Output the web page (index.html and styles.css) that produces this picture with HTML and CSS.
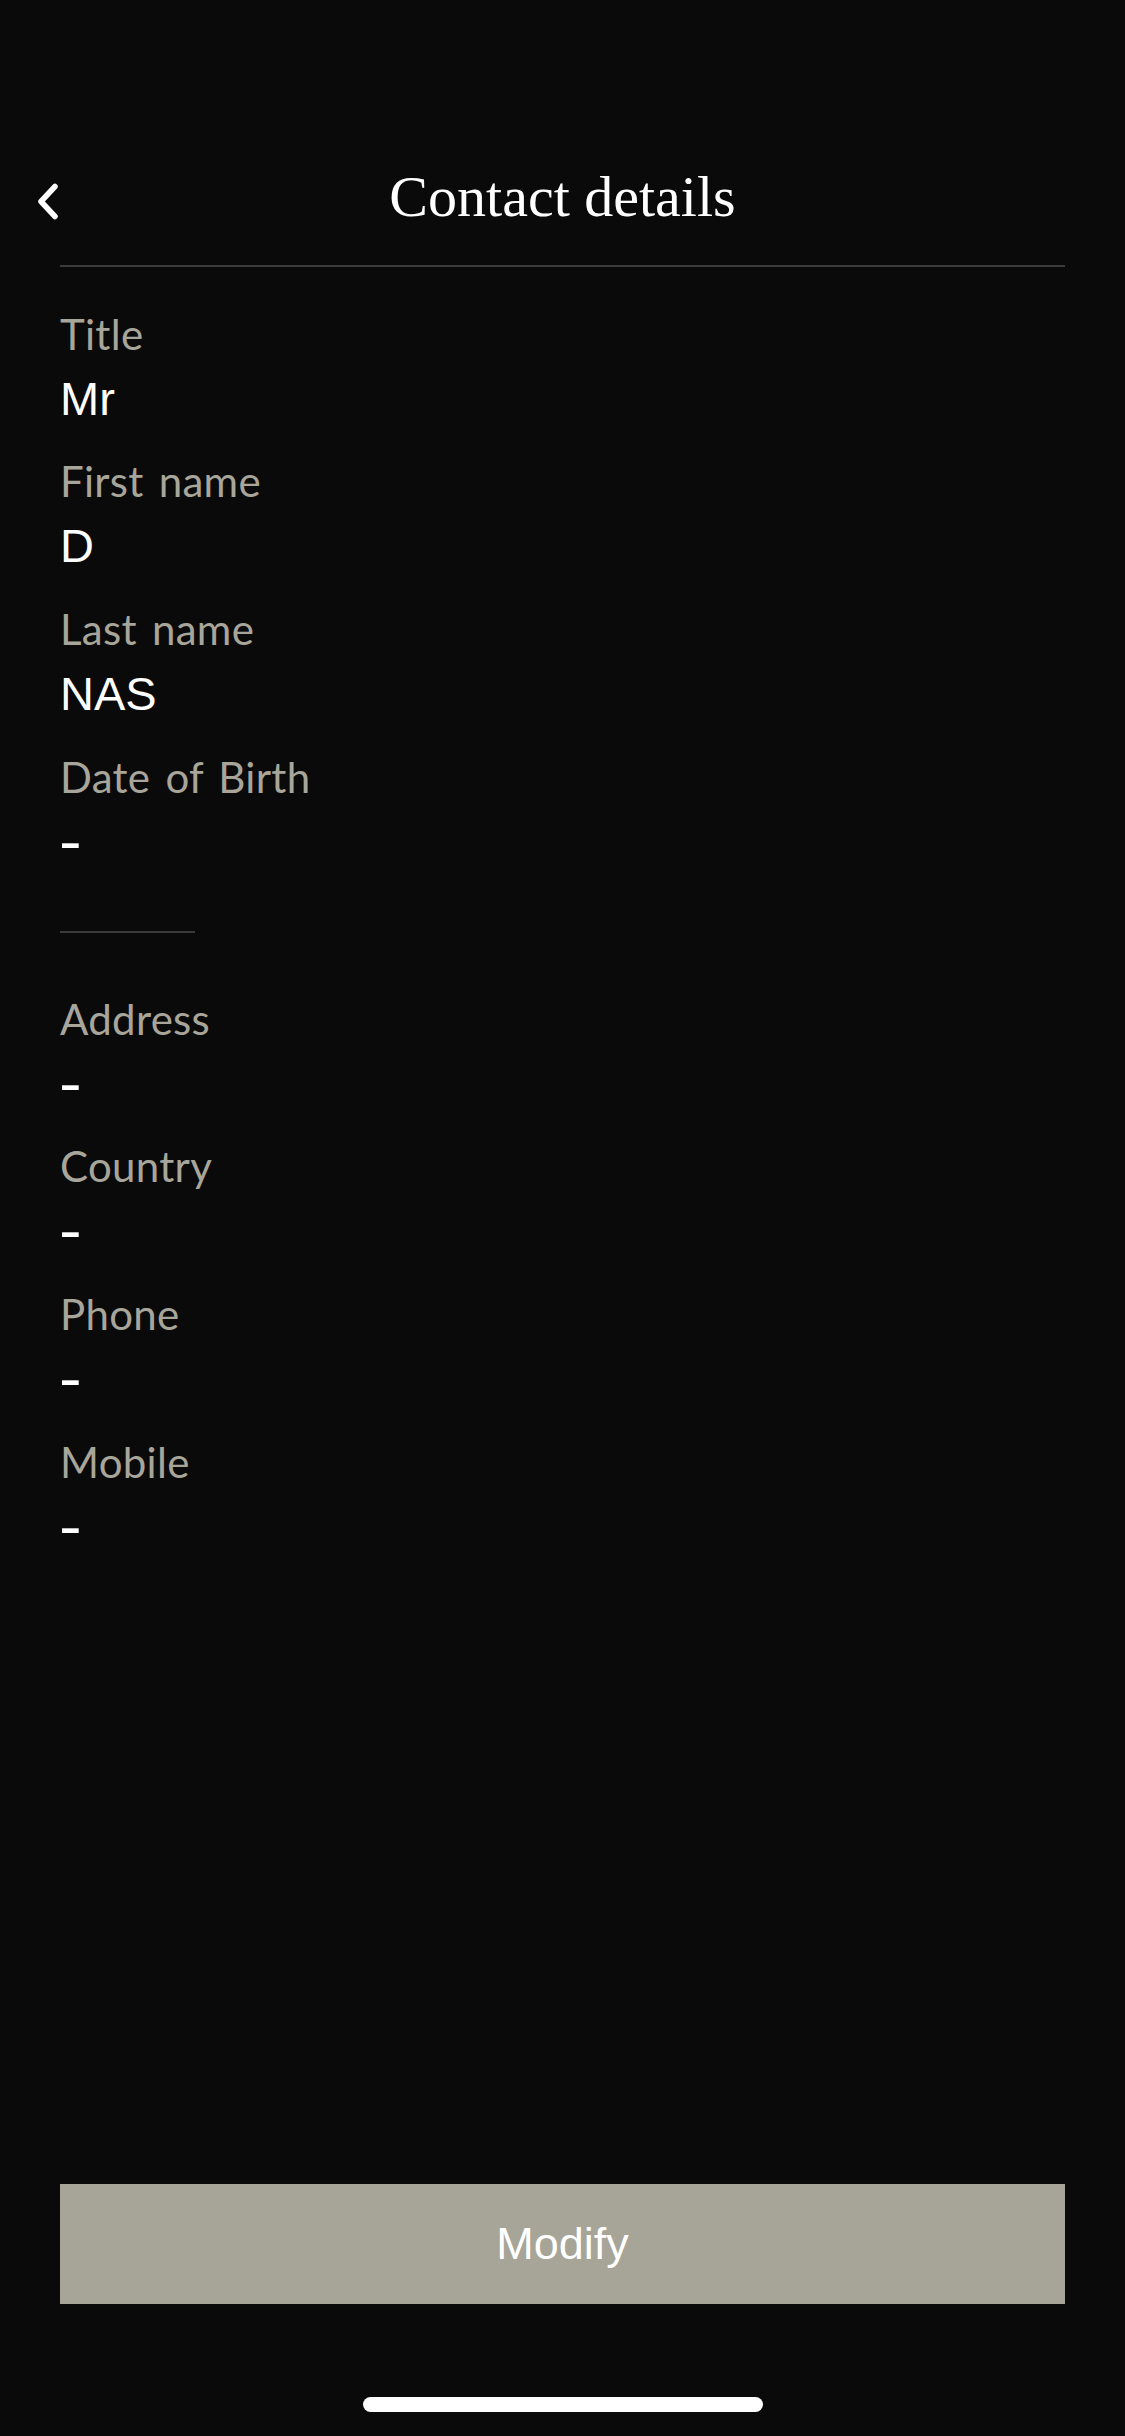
FILE: index.html
```html
<!DOCTYPE html>
<html lang="en">
<head>
<meta charset="utf-8">
<title>Contact details</title>
<link rel="stylesheet" href="styles.css">
</head>
<body>
<main class="content">
  <header class="topbar">
    <div class="back">
      <svg class="chevron" viewBox="0 0 24 37" width="24" height="37" aria-hidden="true">
        <path d="M19 3.5 L5 18.5 L19 33.5" fill="none" stroke="#ffffff" stroke-width="5.5" stroke-linecap="round" stroke-linejoin="round"/>
      </svg>
    </div>
    <h1 class="title">Contact details</h1>
    <div class="spacer"></div>
  </header>
  <div class="rule"></div>

  <section class="fields first">
    <div class="field"><div class="label">Title</div><div class="value">Mr</div></div>
    <div class="field"><div class="label">First name</div><div class="value">D</div></div>
    <div class="field"><div class="label">Last name</div><div class="value">NAS</div></div>
    <div class="field"><div class="label">Date of Birth</div><div class="value"><span class="dash">-</span></div></div>
  </section>

  <div class="short-rule"></div>

  <section class="fields second">
    <div class="field"><div class="label">Address</div><div class="value"><span class="dash">-</span></div></div>
    <div class="field"><div class="label">Country</div><div class="value"><span class="dash">-</span></div></div>
    <div class="field"><div class="label">Phone</div><div class="value"><span class="dash">-</span></div></div>
    <div class="field"><div class="label">Mobile</div><div class="value"><span class="dash">-</span></div></div>
  </section>
</main>

<footer class="footer">
  <button class="modify" type="button">Modify</button>
  <div class="home-indicator"></div>
</footer>
</body>
</html>
```

FILE: styles.css
```css
html, body {
  margin: 0;
  padding: 0;
  background: #0a0a0a;
}

body {
  min-height: 100vh;
  display: flex;
  flex-direction: column;
  color: #ffffff;
  font-family: "Liberation Sans", Arial, sans-serif;
}

.content {
  flex: 1;
}

.topbar {
  padding-top: 168px;
  display: grid;
  grid-template-columns: 1fr auto 1fr;
  height: 58px;
}

.back {
  justify-self: start;
  margin-left: 36px;
  margin-top: 15px;
  height: 37px;
}

.chevron {
  display: block;
}

.title {
  margin: 0;
  font-family: "Liberation Serif", "Times New Roman", serif;
  font-weight: normal;
  font-size: 58px;
  line-height: 58px;
  color: #ffffff;
  white-space: nowrap;
}

.rule {
  margin: 39px 60px 0;
  height: 2px;
  background: #3a3a3a;
}

.fields {
  display: flex;
  flex-direction: column;
  gap: 27.6px;
  padding: 0 60px;
}

.fields.first {
  margin-top: 41.75px;
}

.fields.second {
  margin-top: 60.75px;
}

.label {
  font-family: Lato, "Open Sans", sans-serif;
  font-size: 42px;
  line-height: 50px;
  letter-spacing: 0.3px;
  word-spacing: 4px;
  color: #a8a59b;
}

.value {
  margin-top: 10px;
  font-family: "Liberation Sans", Arial, sans-serif;
  font-size: 47px;
  line-height: 60px;
  color: #ffffff;
}

.dash {
  display: inline-block;
  transform: scaleX(1.45) scaleY(1.25);
  transform-origin: 2px 34px;
}

.short-rule {
  margin: 59.5px 0 0 60px;
  width: 135px;
  height: 2px;
  background: #3a3a3a;
}

.footer {
  display: flex;
  flex-direction: column;
  align-items: center;
}

.modify {
  align-self: stretch;
  margin: 0 60px;
  height: 120px;
  border: 0;
  border-radius: 0;
  padding: 0;
  background: #a7a498;
  color: #ffffff;
  font-family: "Liberation Sans", Arial, sans-serif;
  font-size: 45px;
}

.home-indicator {
  margin: 93px 0 24px;
  width: 400px;
  height: 15px;
  border-radius: 8px;
  background: #ffffff;
}
```
